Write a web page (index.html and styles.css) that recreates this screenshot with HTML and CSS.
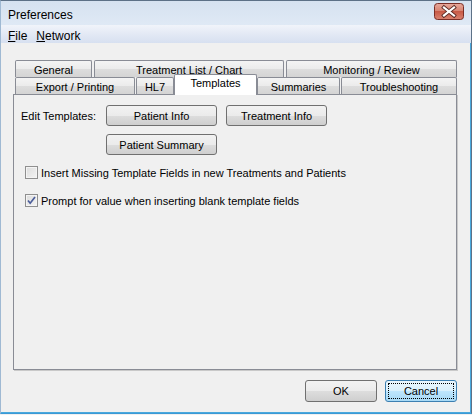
FILE: index.html
```html
<!DOCTYPE html>
<html>
<head>
<meta charset="utf-8">
<link rel="stylesheet" href="styles.css">
</head>
<body>
<div class="window">
  <div class="titlebar">
    <span class="title">Preferences</span>
    <svg class="close" width="30" height="17" viewBox="0 0 30 17">
      <defs>
        <linearGradient id="cg" x1="0" y1="0" x2="0" y2="1">
          <stop offset="0" stop-color="#e8a99c"/>
          <stop offset="0.45" stop-color="#d88573"/>
          <stop offset="0.5" stop-color="#c85a46"/>
          <stop offset="1" stop-color="#d98270"/>
        </linearGradient>
      </defs>
      <rect x="0.5" y="0.5" width="29" height="16" rx="3" fill="url(#cg)" stroke="#7a2e26"/>
      <path d="M10 4.5 L20 12.5 M20 4.5 L10 12.5" stroke="#5a2a24" stroke-width="4" stroke-linecap="square"/>
      <path d="M10 4.5 L20 12.5 M20 4.5 L10 12.5" stroke="#ffffff" stroke-width="2.2" stroke-linecap="square"/>
    </svg>
  </div>
  <div class="menubar">
    <span class="menu"><u>F</u>ile</span>
    <span class="menu"><u>N</u>etwork</span>
  </div>
  <div class="client">
    <div class="tabs">
      <div class="tabrow row1">
        <div class="tab w-general">General</div>
        <div class="tab w-treat">Treatment List / Chart</div>
        <div class="tab w-monitor">Monitoring / Review</div>
      </div>
      <div class="tabrow row2">
        <div class="tab w-export">Export / Printing</div>
        <div class="tab w-hl7">HL7</div>
        <div class="tab selected w-templates">Templates</div>
        <div class="tab w-summ">Summaries</div>
        <div class="tab w-trouble">Troubleshooting</div>
      </div>
    </div>
    <div class="panel">
      <div class="editgrid">
        <span class="label">Edit Templates:</span>
        <button class="btn b-pinfo">Patient Info</button>
        <button class="btn b-tinfo">Treatment Info</button>
        <button class="btn b-psum">Patient Summary</button>
      </div>
      <label class="check first">
        <span class="box"></span>
        <span>Insert Missing Template Fields in new Treatments and Patients</span>
      </label>
      <label class="check second">
        <span class="box checked">
          <svg width="11" height="11" viewBox="0 0 11 11"><path d="M2 5.5 L4.2 8.2 L9 2" fill="none" stroke="#4b5d9a" stroke-width="1.7"/></svg>
        </span>
        <span>Prompt for value when inserting blank template fields</span>
      </label>
    </div>
    <div class="footer">
      <button class="btn dlg">OK</button>
      <button class="btn dlg default"><span class="focus">Cancel</span></button>
    </div>
  </div>
</div>
</body>
</html>
```

FILE: styles.css
```css
html, body {
  margin: 0;
  padding: 0;
  width: 472px;
  height: 415px;
  overflow: hidden;
  background: #f0f0f0;
}
body {
  font-family: "Liberation Sans", Arial, sans-serif;
  font-size: 11px;
  color: #000;
}
.window {
  box-sizing: border-box;
  width: 472px;
  height: 414px;
  border: 1px solid #5d7187;
  border-left-color: #9fb9d3;
  box-shadow: inset -1px -1px 0 #4aa8dc;
  border-bottom: 1px solid #3a9ad6;
  display: flex;
  flex-direction: column;
  background: #f0f0f0;
}
.titlebar {
  height: 24px;
  background: linear-gradient(#d6e2f0, #dbe6f3 60%, #dfe9f5);
  display: flex;
  align-items: center;
  justify-content: space-between;
  padding: 0 7px 0 7px;
}
.title {
  font-size: 12px;
  color: #000;
  padding-top: 3px;
}
.close {
  display: block;
  margin-top: -3px;
}
.menubar {
  box-sizing: border-box;
  height: 18px;
  background: linear-gradient(#f1f4fa, #e3e9f5 50%, #d7e0f0);
  display: flex;
  align-items: center;
  padding: 3px 0 0 7px;
  gap: 9px;
  font-size: 12px;
}
.menu u { text-decoration: underline; }
.client {
  flex: 1;
  display: flex;
  flex-direction: column;
  padding: 17px 14px 0 12px;
}
.tabs {
  display: flex;
  flex-direction: column;
  padding-left: 2px;
  position: relative;
  z-index: 1;
}
.tabrow {
  display: flex;
  height: 17px;
}
.row1 { gap: 2px; }
.tab {
  box-sizing: border-box;
  height: 17px;
  border: 1px solid #898c95;
  border-bottom: none;
  border-radius: 2px 2px 0 0;
  background: linear-gradient(#f4f4f4, #ebebeb 50%, #dddddd 51%, #d4d4d4);
  display: flex;
  align-items: center;
  justify-content: center;
  padding-top: 1px;
  white-space: nowrap;
}
.w-general { width: 77px; }
.w-treat { width: 190px; }
.w-monitor { width: 171px; }
.w-export { width: 120px; margin-right: 1px; }
.w-hl7 { width: 38px; }
.w-templates { width: 83px; }
.w-summ { width: 83px; margin-right: 1px; }
.w-trouble { width: 116px; }
.tab.selected {
  background: #ffffff;
  height: 21px;
  margin-top: -3px;
  margin-bottom: -1px;
  padding-top: 0;
  padding-bottom: 4px;
  position: relative;
  z-index: 2;
}
.panel {
  box-sizing: border-box;
  height: 276px;
  border: 1px solid #898c95;
  box-shadow: 1px 1px 0 #c9c9c9;
  background: #f0f0f0;
  padding: 10px 0 0 6px;
  display: flex;
  flex-direction: column;
}
.editgrid {
  display: grid;
  grid-template-columns: 77px 111px 101px;
  grid-template-rows: 21px 21px;
  column-gap: 9px;
  row-gap: 8px;
  align-items: center;
}
.label { padding-left: 1px; }
.b-psum { grid-column: 2; grid-row: 2; }
.btn {
  box-sizing: border-box;
  height: 21px;
  border: 1px solid #707070;
  border-radius: 3px;
  background: linear-gradient(#f2f2f2, #ebebeb 50%, #dddddd 51%, #cfcfcf);
  font-family: inherit;
  font-size: 11px;
  color: #000;
  padding: 0;
  margin: 0;
}
.check {
  display: flex;
  align-items: center;
  gap: 3px;
  margin-left: 5px;
  height: 13px;
}
.check.first { margin-top: 11px; }
.check.second { margin-top: 15px; }
.box {
  box-sizing: border-box;
  width: 13px;
  height: 13px;
  border: 1px solid #8f8f8f;
  background: linear-gradient(135deg, #dcdcdc, #f4f4f4);
  box-shadow: inset 0 0 0 1px #f4f4f4;
  display: flex;
  align-items: center;
  justify-content: center;
}
.box svg { display: block; }
.footer {
  display: flex;
  justify-content: flex-end;
  gap: 8px;
  padding-top: 10px;
}
.btn.dlg {
  width: 72px;
  height: 22px;
}
.btn.default {
  border-color: #3c7fb1;
  background: linear-gradient(#eaf6fd, #d9f0fc 50%, #bee6fd 51%, #a7d9f5);
  padding: 2px;
  display: flex;
}
.focus {
  flex: 1;
  border: 1px dotted #000;
  display: flex;
  align-items: center;
  justify-content: center;
}
```
